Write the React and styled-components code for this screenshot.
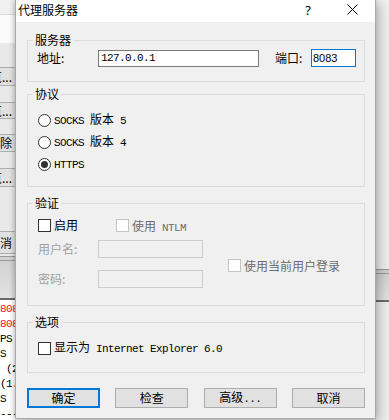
import React from "react";
import styled, { createGlobalStyle, css } from "styled-components";

const GlobalStyle = createGlobalStyle`
  html, body { margin: 0; padding: 0; background: #f0f0f0; }
  body {
    width: 389px; height: 420px; overflow: hidden;
    font-family: "Noto Sans CJK SC", "Noto Sans", sans-serif;
    font-size: 12px; color: #000;
  }
`;

const monoText = css`
  font-family: "Liberation Mono", monospace;
  font-size: 11px;
  letter-spacing: -0.6px;
`;

const Screen = styled.div`
  display: grid;
  grid-template-columns: 15px 361px 13px;
  height: 420px;
  overflow: hidden;
  background: #f0f0f0;
`;

/* ---------- background window (left) ---------- */
const BackStrip = styled.div`
  display: flex;
  flex-direction: column;
  min-width: 0;
  overflow: hidden;
  background: #e9e9e9;
`;
const BackHeader = styled.div`
  flex: none;
  height: 14px;
  background: #f0f0f0;
  border-bottom: 1px solid #d9d9d9;
`;
const BackWhite = styled.div`
  flex: none;
  height: 28px;
  background: #fbfbfb;
`;
const BackButton = styled.div`
  flex: none;
  display: flex;
  justify-content: flex-end;
  align-items: center;
  box-sizing: border-box;
  margin-top: ${(p) => p.$gap}px;
  height: ${(p) => p.$h}px;
  padding-right: 3px;
  background: #e1e1e1;
  border-top: 1px solid #adadad;
  border-bottom: 1px solid #adadad;
  white-space: nowrap;
  font-size: 12px;
  line-height: 14px;
  color: #000;
`;
const BackBand = styled.div`
  flex: none;
  box-sizing: border-box;
  margin-top: ${(p) => p.$gap}px;
  height: ${(p) => p.$h}px;
  border-top: 1px solid #9a9a9a;
  border-bottom: 2px solid #6b6b6b;
  background:
    linear-gradient(#9a9a9a, #9a9a9a) 0 3px / 100% 1px no-repeat,
    linear-gradient(#d0d0d0, #e2e2e2);
`;
const Console = styled.div`
  flex: 1;
  background: #ffffff;
  padding-top: 2px;
  ${monoText}
  line-height: 15px;
  white-space: pre;
`;
const ConsoleLine = styled.div`
  color: ${(p) => (p.$red ? "#e81123" : "#000")};
`;

/* ---------- right strip ---------- */
const RightStrip = styled.div`
  display: flex;
  flex-direction: column;
  background: #f0f0f0;
`;

/* ---------- dialog ---------- */
const Dialog = styled.div`
  position: relative;
  z-index: 1;
  align-self: start;
  display: flex;
  flex-direction: column;
  box-sizing: border-box;
  height: 419px;
  background: #f0f0f0;
  border: 1px solid #a9a9a9;
  border-top: none;
  box-shadow: -1px 0 5px rgba(0, 0, 0, 0.22), 5px 3px 11px rgba(0, 0, 0, 0.2);
`;
const TitleBar = styled.div`
  flex: none;
  display: flex;
  align-items: center;
  height: 22px;
  background: #ffffff;
`;
const Title = styled.div`
  flex: 1;
  padding-left: 2px;
  font-size: 12px;
  line-height: 16px;
  margin-top: -3px;
`;
const HelpGlyph = styled.div`
  width: 30px;
  text-align: center;
  font-family: "Noto Sans", sans-serif;
  font-size: 13px;
  line-height: 16px;
  margin-top: -3px;
`;
const CloseBtn = styled.div`
  width: 46px;
  margin-left: 6px;
  display: flex;
  justify-content: center;
  align-items: center;
  margin-top: -4px;
`;
const Body = styled.div`
  display: flex;
  flex-direction: column;
  padding: 11px 10px 0 11px;
`;
const Group = styled.fieldset`
  margin: ${(p) => p.$mt || 0}px 0 0 0;
  padding: 0;
  min-width: 0;
  border: 1px solid #dcdcdc;
`;
const Legend = styled.legend`
  margin-left: 5px;
  padding: 0 2px;
  font-size: 12px;
  line-height: 14px;
`;
const GroupBody = styled.div`
  padding: ${(p) => p.$pad};
`;

const ServerRow = styled.div`
  display: grid;
  grid-template-columns: 61px 161px 16px 36px 45px;
  align-items: center;
  height: 18px;
`;
const Label = styled.span`
  font-size: 12px;
  line-height: 14px;
  white-space: pre;
  color: ${(p) => (p.$disabled ? "#a0a0a0" : "#000")};
`;
const TextField = styled.input`
  box-sizing: border-box;
  margin: 0;
  width: 100%;
  outline: none;
  border: 1px solid ${(p) => (p.$focused ? "#0078d7" : p.disabled ? "#cccccc" : "#7a7a7a")};
  background: ${(p) => (p.disabled ? "#f0f0f0" : "#ffffff")};
  height: ${(p) => p.$h}px;
  padding: 0 0 0 ${(p) => p.$pl}px;
  color: #000;
  ${(p) =>
    p.$mono
      ? monoText
      : css`
          font-family: "Liberation Sans", sans-serif;
          font-size: 11px;
        `}
`;

const Latin = styled.span`
  ${monoText}
`;

const RadioRow = styled.label`
  display: flex;
  align-items: center;
  height: 22px;
  gap: 3px;
`;
const RadioCircle = styled.span`
  flex: none;
  box-sizing: border-box;
  width: 13px;
  height: 13px;
  border-radius: 50%;
  border: 1px solid #333;
  background: #fff;
  display: flex;
  align-items: center;
  justify-content: center;
  &::after {
    content: "";
    display: ${(p) => (p.$checked ? "block" : "none")};
    width: 7px;
    height: 7px;
    border-radius: 50%;
    background: #333;
  }
`;
const CheckRow = styled.label`
  display: flex;
  align-items: center;
  gap: 3px;
  height: 14px;
  color: ${(p) => (p.$disabled ? "#6d6d6d" : "#000")};
`;
const CheckBox = styled.span`
  flex: none;
  box-sizing: border-box;
  width: 13px;
  height: 13px;
  border: 1px solid ${(p) => (p.$disabled ? "#c4c4c4" : "#333")};
  background: #fff;
`;
const AuthTop = styled.div`
  display: grid;
  grid-template-columns: 78px auto;
  align-items: center;
`;
const CredBlock = styled.div`
  display: flex;
  align-items: center;
  margin-top: 8px;
`;
const CredFields = styled.div`
  display: flex;
  flex-direction: column;
  gap: 12px;
`;
const CredRow = styled.div`
  display: grid;
  grid-template-columns: 60px 105px;
  align-items: center;
  height: 18px;
`;
const CurrentUser = styled(CheckRow)`
  margin-left: 25px;
  margin-top: 2px;
`;
const PreText = styled.span`
  white-space: pre;
`;

const ButtonBar = styled.div`
  display: flex;
  justify-content: space-between;
  margin-top: 15px;
`;
const Button = styled.button`
  box-sizing: border-box;
  width: 73px;
  height: 20px;
  margin: 0;
  padding: 0;
  background: #e1e1e1;
  border: ${(p) => (p.$default ? "2px solid #0078d7" : "1px solid #adadad")};
  font-family: "Noto Sans CJK SC", sans-serif;
  font-size: 12px;
  line-height: 14px;
  color: #000;
  white-space: pre;
`;

export default function App() {
  return (
    <>
      <GlobalStyle />
      <Screen>
        <BackStrip>
          <BackHeader />
          <BackWhite />
          <BackButton $gap={24} $h={19}>浏览...</BackButton>
          <BackButton $gap={16} $h={17}>浏览...</BackButton>
          <BackButton $gap={15} $h={18}>删除</BackButton>
          <BackButton $gap={16} $h={19}>浏览...</BackButton>
          <BackButton $gap={44} $h={23}>取消</BackButton>
          <BackBand $gap={2} $h={44} />
          <Console>
            <ConsoleLine $red>8083</ConsoleLine>
            <ConsoleLine $red>8083</ConsoleLine>
            <ConsoleLine>PS</ConsoleLine>
            <ConsoleLine>S</ConsoleLine>
            <ConsoleLine> (2</ConsoleLine>
            <ConsoleLine>(1.</ConsoleLine>
            <ConsoleLine>S</ConsoleLine>
            <ConsoleLine>-----</ConsoleLine>
          </Console>
        </BackStrip>

        <Dialog>
          <TitleBar>
            <Title>代理服务器</Title>
            <HelpGlyph>?</HelpGlyph>
            <CloseBtn>
              <svg width="11" height="11" viewBox="0 0 11 11">
                <path d="M0.5 0.5 L10.5 10.5 M10.5 0.5 L0.5 10.5" stroke="#000" strokeWidth="1" fill="none" />
              </svg>
            </CloseBtn>
          </TitleBar>

          <Body>
            <Group>
              <Legend>服务器</Legend>
              <GroupBody $pad="2px 0 14px 9px">
                <ServerRow>
                  <Label>地址:</Label>
                  <TextField readOnly value="127.0.0.1" $mono $h={17} $pl={2} />
                  <span />
                  <Label>端口:</Label>
                  <TextField readOnly value="8083" $focused $h={18} $pl={1} />
                </ServerRow>
              </GroupBody>
            </Group>

            <Group $mt={5}>
              <Legend>协议</Legend>
              <GroupBody $pad="8px 0 11px 10px">
                <RadioRow>
                  <RadioCircle />
                  <Label>
                    <Latin>SOCKS </Latin>版本<Latin> 5</Latin>
                  </Label>
                </RadioRow>
                <RadioRow>
                  <RadioCircle />
                  <Label>
                    <Latin>SOCKS </Latin>版本<Latin> 4</Latin>
                  </Label>
                </RadioRow>
                <RadioRow>
                  <RadioCircle $checked />
                  <Label>
                    <Latin>HTTPS</Latin>
                  </Label>
                </RadioRow>
              </GroupBody>
            </Group>

            <Group $mt={9}>
              <Legend>验证</Legend>
              <GroupBody $pad="8px 0 17px 10px">
                <AuthTop>
                  <CheckRow>
                    <CheckBox />
                    <Label>启用</Label>
                  </CheckRow>
                  <CheckRow $disabled>
                    <CheckBox $disabled />
                    <PreText>
                      使用<Latin> NTLM</Latin>
                    </PreText>
                  </CheckRow>
                </AuthTop>
                <CredBlock>
                  <CredFields>
                    <CredRow>
                      <Label $disabled>用户名:</Label>
                      <TextField disabled value="" readOnly $h={18} $pl={2} />
                    </CredRow>
                    <CredRow>
                      <Label $disabled>密码:</Label>
                      <TextField disabled value="" readOnly $h={18} $pl={2} />
                    </CredRow>
                  </CredFields>
                  <CurrentUser $disabled>
                    <CheckBox $disabled />
                    <span>使用当前用户登录</span>
                  </CurrentUser>
                </CredBlock>
              </GroupBody>
            </Group>

            <Group $mt={9}>
              <Legend>选项</Legend>
              <GroupBody $pad="12px 0 17px 10px">
                <CheckRow>
                  <CheckBox />
                  <Label>
                    显示为<Latin> Internet Explorer 6.0</Latin>
                  </Label>
                </CheckRow>
              </GroupBody>
            </Group>

            <ButtonBar>
              <Button $default>确定</Button>
              <Button>检查</Button>
              <Button>
                高级<Latin>...</Latin>
              </Button>
              <Button>取消</Button>
            </ButtonBar>
          </Body>
        </Dialog>

        <RightStrip>
          <BackBand $gap={269} $h={33} />
        </RightStrip>
      </Screen>
    </>
  );
}
